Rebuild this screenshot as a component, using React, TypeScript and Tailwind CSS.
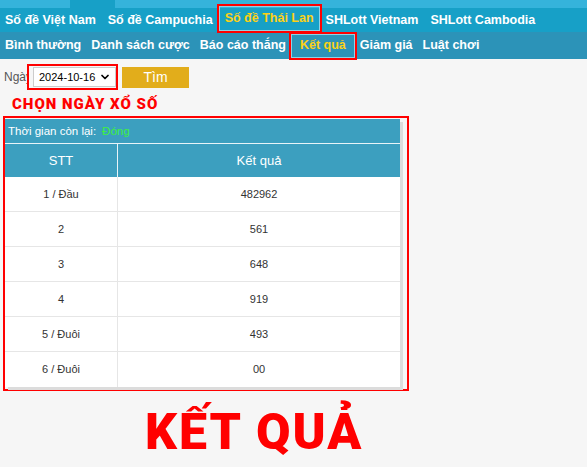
import { ChevronDown } from "lucide-react";

const topMenu = ["Số đề Việt Nam", "Số đề Campuchia", "Số đề Thái Lan", "SHLott Vietnam", "SHLott Cambodia"];
const subMenu = ["Bình thường", "Danh sách cược", "Báo cáo thắng", "Kết quả", "Giảm giá", "Luật chơi"];

const results = [
  { stt: "1 / Đầu", value: "482962" },
  { stt: "2", value: "561" },
  { stt: "3", value: "648" },
  { stt: "4", value: "919" },
  { stt: "5 / Đuôi", value: "493" },
  { stt: "6 / Đuôi", value: "00" },
];

export default function App() {
  return (
    <div className="min-h-[467px] bg-[#f6f6f6] font-['Liberation_Sans',Arial,sans-serif] text-[#333]">
      {/* top strip */}
      <div className="flex h-[8px] bg-[#35b3db]">
        <div className="ml-[70px] w-[45px] bg-[#17a0c7]" />
      </div>

      {/* main menu */}
      <div className="flex h-[24px] items-center bg-[#17a0c7]">
        {topMenu.map((item) => {
          const active = item === "Số đề Thái Lan";
          return active ? (
            <div
              key={item}
              className="flex h-[25px] shrink-0 -translate-y-[2px] items-center whitespace-nowrap border border-[#8fd2e6] px-[5px] text-[12.5px] font-bold text-[#fcd116] outline-2 outline-[#f00]"
            >
              {item}
            </div>
          ) : (
            <div
              key={item}
              className="flex h-[24px] shrink-0 items-center whitespace-nowrap px-[6px] text-[12.5px] font-bold text-white first:pl-[5px]"
            >
              {item}
            </div>
          );
        })}
      </div>

      {/* sub menu */}
      <div className="flex h-[27px] items-center bg-[#2c93b8]">
        {subMenu.map((item) => {
          const active = item === "Kết quả";
          return active ? (
            <div
              key={item}
              className="flex h-[24px] shrink-0 items-center whitespace-nowrap border border-[#8fd2e6] px-[8px] text-[12.5px] font-bold text-[#fcd116] outline-2 outline-[#f00]"
            >
              {item}
            </div>
          ) : (
            <div
              key={item}
              className="flex h-[24px] shrink-0 items-center whitespace-nowrap px-[5px] text-[12.5px] font-bold text-white"
            >
              {item}
            </div>
          );
        })}
      </div>

      {/* date picker */}
      <div className="mt-[5px] flex items-center pl-[4px]">
        <span className="w-[23px] shrink-0 overflow-hidden whitespace-nowrap text-[12px] text-[#555]">Ngày</span>
        <div className="flex h-[26px] w-[91px] shrink-0 items-center border-2 border-[#f00] pl-[4px]">
          <div className="flex h-[20px] w-[83px] items-center justify-between border border-[#ccc] bg-white pl-[5px] pr-[4px] text-[11px] text-black">
            <span className="whitespace-nowrap">2024-10-16</span>
            <ChevronDown size={12} strokeWidth={3.5} />
          </div>
        </div>
        <button className="ml-[4px] h-[21px] w-[67px] bg-[#e2ad1b] text-[14px] text-white">Tìm</button>
      </div>

      <div className="mt-[5px] pl-[12px] font-['Roboto',sans-serif] text-[15px] font-black leading-[18px] tracking-[1px] text-[#f00]">
        CHỌN NGÀY XỔ SỐ
      </div>

      {/* result table */}
      <div className="ml-[3px] mt-[3px] w-[406px] border-2 border-[#f00] pb-[2px] pt-px">
        <div className="w-[395px] bg-white shadow-[3px_3px_0_#dcdcdc]">
          <div className="flex h-[25px] items-center border-b border-[#e8f4f8] bg-[#3c9fbf] pl-[3px] pt-[2px] text-[11.5px] text-white">
            Thời gian còn lại:
            <span className="ml-[6px] text-[#3ff03f]">Đóng</span>
          </div>
          <div className="flex h-[33px] bg-[#3c9fbf] text-[13px] text-white">
            <div className="flex w-[113px] items-center justify-center border-r border-[#e8f4f8]">STT</div>
            <div className="flex flex-1 items-center justify-center">Kết quả</div>
          </div>
          {results.map((row, i) => (
            <div
              key={row.stt}
              className={`flex h-[35px] text-[11px] text-[#333] ${i < results.length - 1 ? "border-b border-[#e6e6e6]" : ""}`}
            >
              <div className="flex w-[113px] items-center justify-center border-r border-[#e6e6e6]">{row.stt}</div>
              <div className="flex flex-1 items-center justify-center">{row.value}</div>
            </div>
          ))}
        </div>
      </div>

      <div className="mt-[13px] pl-[145px] font-['Roboto',sans-serif] text-[50px] font-black leading-[56px] tracking-[2px] text-[#f00]">
        KẾT QUẢ
      </div>
    </div>
  );
}
